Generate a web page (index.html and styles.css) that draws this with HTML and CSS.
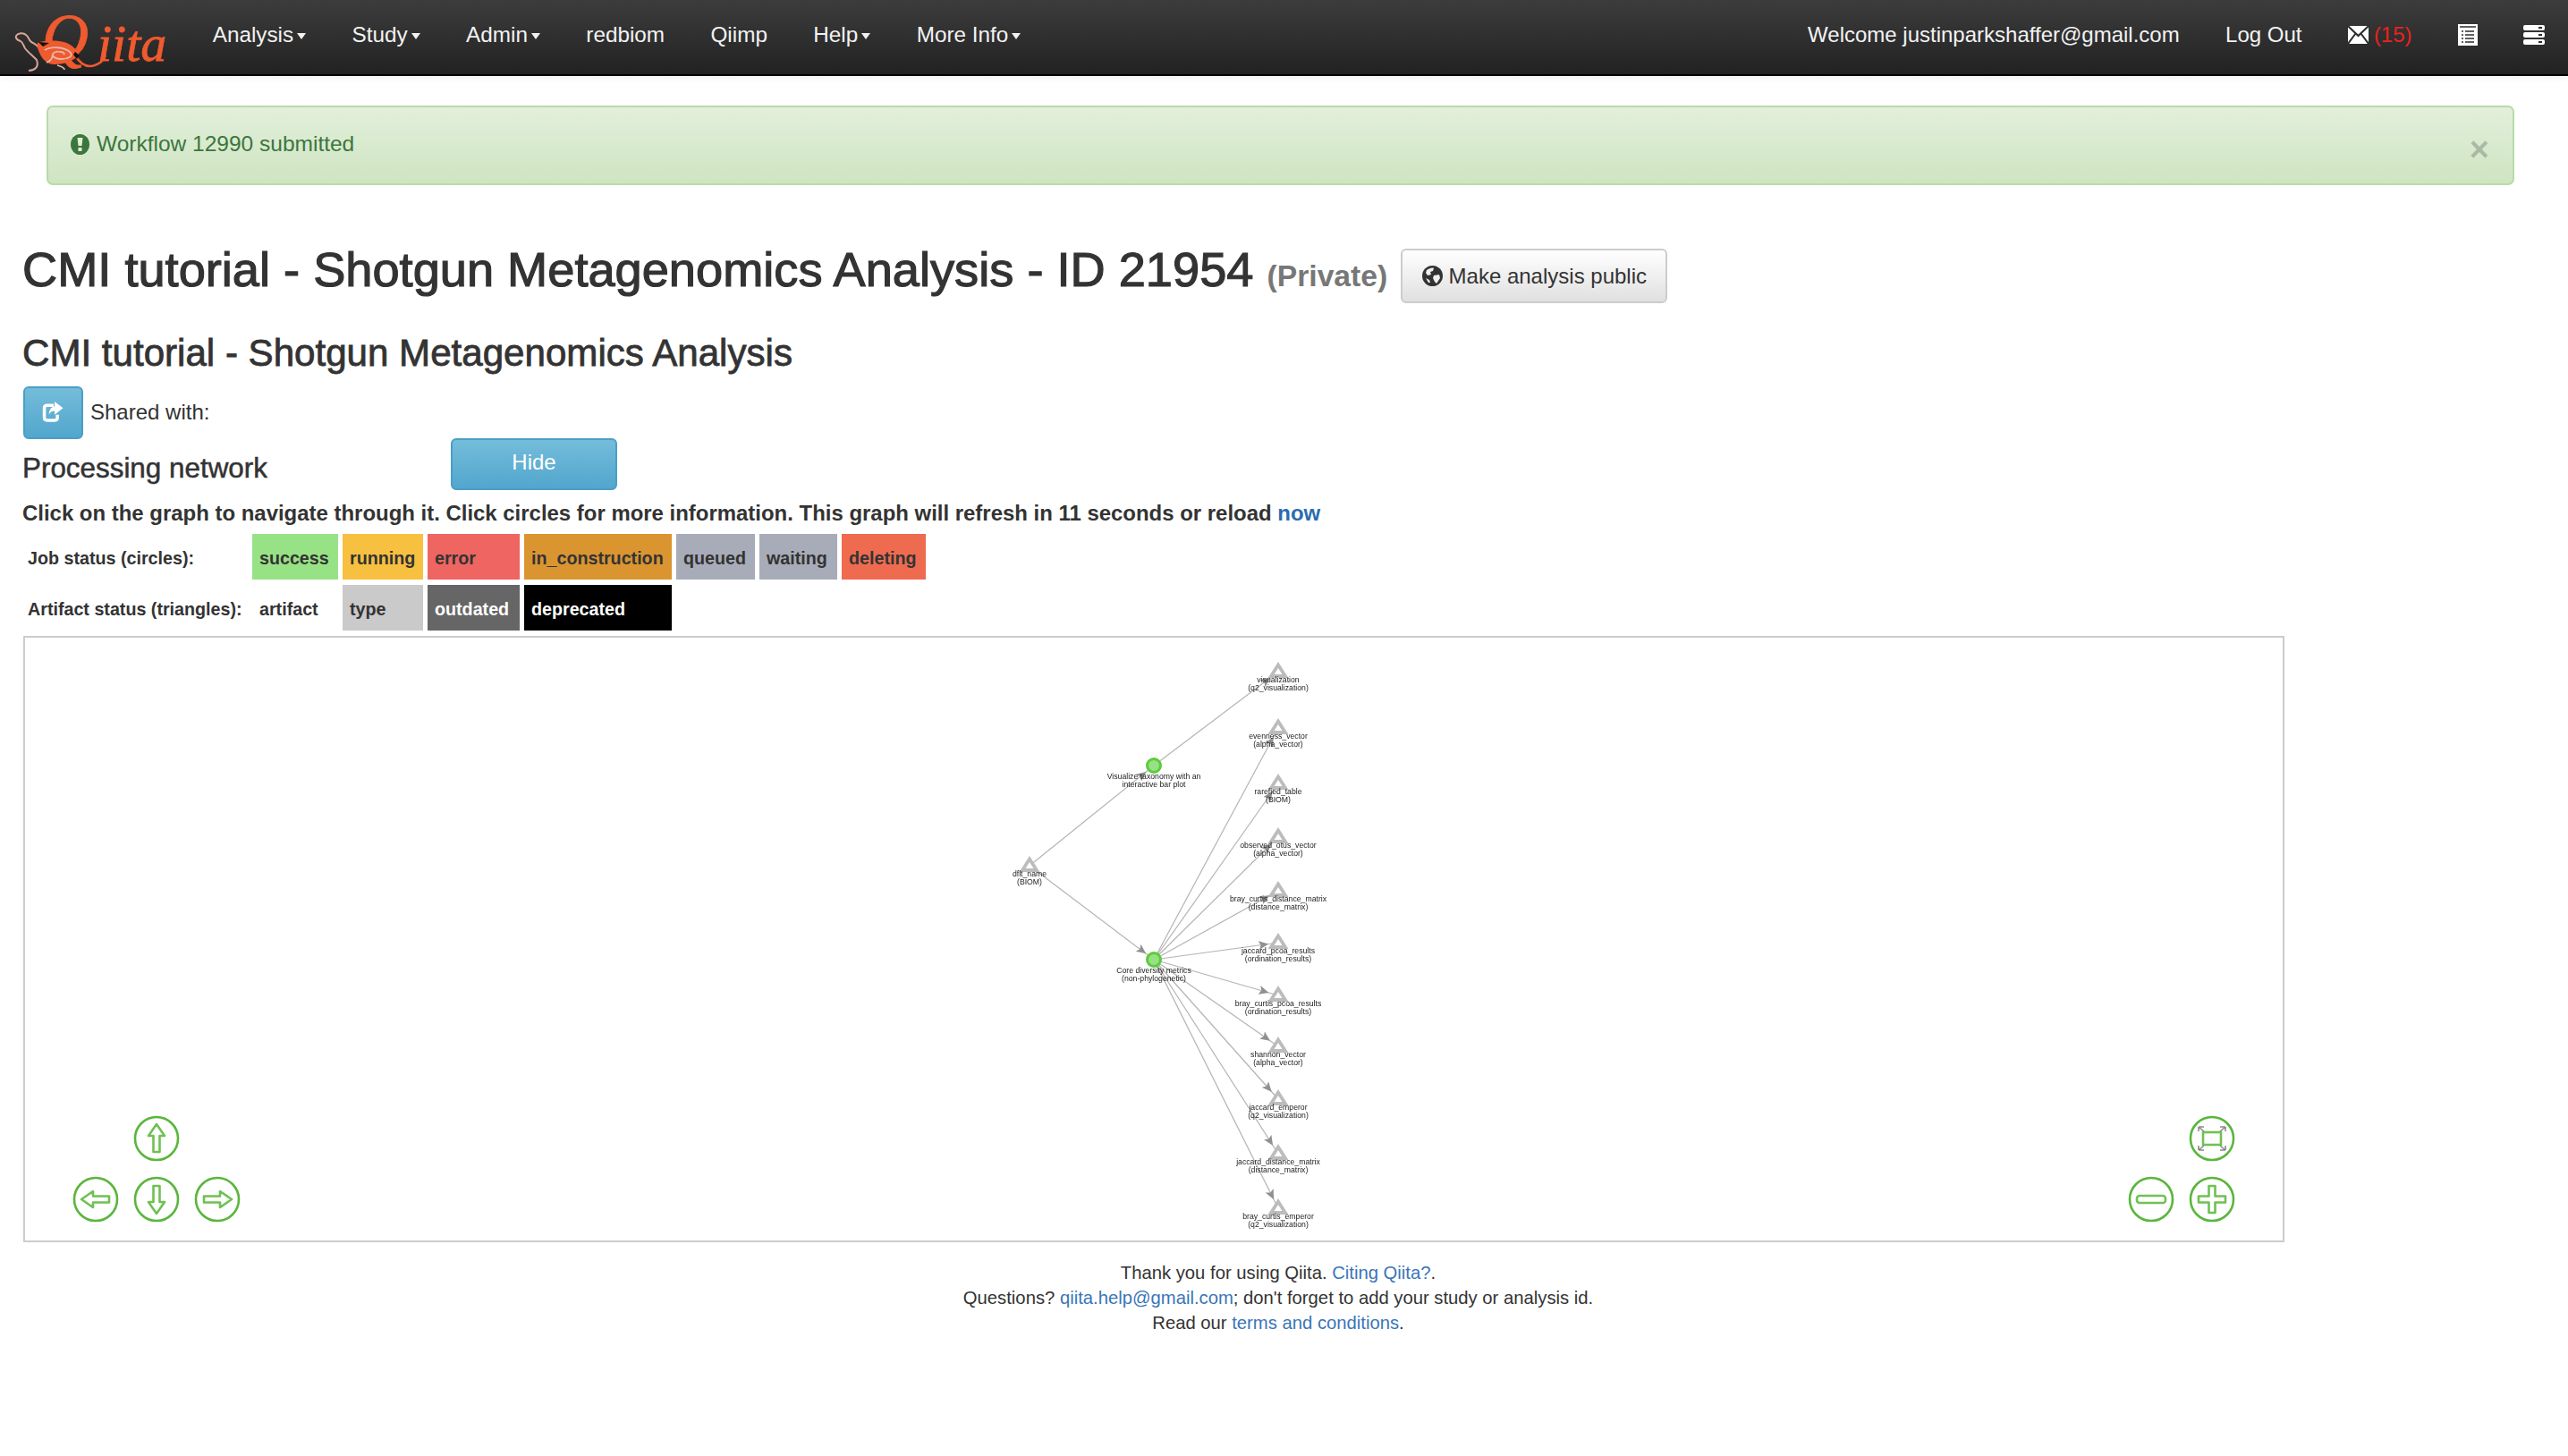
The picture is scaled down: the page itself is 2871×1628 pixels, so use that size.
FILE: index.html
```html
<!DOCTYPE html>
<html lang="en">
<head>
    <meta charset="UTF-8">
    <title>Qiita - Analysis</title>
    <link rel="stylesheet" href="styles.css">
</head>
<body>
    <nav class="navbar">
        <a class="logo" href="#">
            <svg width="212" height="83" viewBox="0 0 212 83">
                <text class="logo-q" x="47" y="65">Q</text>
                <text class="logo-iita" x="109" y="68">iita</text>
                <path class="logo-tail" d="M84 62c6 10 13 14 22 11 6-2 10-6 12-11" />
                <path class="turtle-line" d="M18 40c2-3 8-4 11-1 3 2 3 5 5 7 3 3 7 3 9 7M18 40c-1 3 2 5 5 6 3 2 3 5 5 8 3 4 8 8 13 13 1 3 1 7-1 9-2 2-5 3-8 3" />
                <path class="turtle-shell" d="M42 48c12-4 30-3 38 3 5 4 8 8 8 11-6 6-16 10-27 10-8 0-13-5-16-11-2-4-4-9-3-13z" />
                <path class="turtle-swirl" d="M50 56c8-5 22-3 28 2 3 3 2 6-3 7-6 2-14 1-16-3-1-3 4-5 8-4 4 0 6 2 4 3M52 70c5-2 7-6 7-10M64 73c4 1 8 3 8 5" />
                <path class="turtle-mark" d="M43 47l12 1-7 4zM84 58l5 4-3 4-4-5z" />
            </svg>
        </a>
        <ul class="nav-list">
            <li class="nav-item">Analysis<span class="caret"></span></li>
            <li class="nav-item">Study<span class="caret"></span></li>
            <li class="nav-item">Admin<span class="caret"></span></li>
            <li class="nav-item">redbiom</li>
            <li class="nav-item">Qiimp</li>
            <li class="nav-item">Help<span class="caret"></span></li>
            <li class="nav-item">More Info<span class="caret"></span></li>
        </ul>
        <ul class="nav-list nav-right">
            <li class="nav-item">Welcome justinparkshaffer@gmail.com</li>
            <li class="nav-item">Log Out</li>
            <li class="nav-item">
                <svg class="nav-icon" width="23" height="20" viewBox="0 0 23 20">
                    <path fill="#fff" d="M0 0h23v20H0z" />
                    <path fill="none" stroke="#2c2c2c" stroke-width="2" d="M0 0l11.5 11L23 0M0 20l8.5-11.5M23 20L14.5 8.5" />
                </svg>
                <span class="mail-count">(15)</span>
            </li>
            <li class="nav-item">
                <svg class="nav-icon" width="22" height="24" viewBox="0 0 22 24">
                    <path fill="#fff" d="M0 0h22v24H0z" />
                    <path fill="none" stroke="#2c2c2c" stroke-width="1.6" d="M2 3h18M4 8h2M8 8h10M4 12h2M8 12h10M4 16h2M8 16h10M4 20h2M8 20h10" />
                </svg>
            </li>
            <li class="nav-item">
                <svg class="nav-icon" width="24" height="22" viewBox="0 0 24 22">
                    <rect fill="#fff" width="24" height="6" rx="2" />
                    <rect fill="#fff" y="8" width="24" height="6" rx="2" />
                    <rect fill="#fff" y="16" width="24" height="6" rx="2" />
                    <path fill="#2c2c2c" d="M17 2h4v2h-4zM17 10h4v2h-4zM17 18h4v2h-4z" />
                </svg>
            </li>
        </ul>
    </nav>

    <div class="alert">
        <span class="alert-text">
            <svg class="alert-icon" width="21" height="23" viewBox="0 0 21 23">
                <ellipse cx="10.5" cy="11.5" rx="10.5" ry="11.5" fill="#3c763d" />
                <path fill="#dff0d8" d="M7.5 4h6l-1 9h-4zM8.5 15h4v4h-4z" />
            </svg>
            Workflow 12990 submitted
        </span>
        <span class="alert-close">×</span>
    </div>

    <div class="title-row">
        <h1>CMI tutorial - Shotgun Metagenomics Analysis - ID 21954 <small>(Private)</small></h1>
        <button class="btn btn-default">
            <svg width="23" height="23" viewBox="0 0 23 23">
                <circle cx="11.5" cy="11.5" r="11.5" fill="#333" />
                <path fill="#f0f0f0" d="M5 5c3-2 6-3 8-2l-1 3-3 1 1 3-4 1-2-3zM13 11l6-1 1 4-4 6-2-2-2-4zM4 14l4 2 1 3-2 0z" />
            </svg>
            Make analysis public
        </button>
    </div>

    <h2>CMI tutorial - Shotgun Metagenomics Analysis</h2>

    <div class="share-row">
        <button class="btn btn-info btn-share">
            <svg width="25" height="23" viewBox="0 0 23 22">
                <path fill="none" stroke="#fff" stroke-width="3.4" d="M12 4H5C3 4 2 5 2 7v10c0 2 1 3 3 3h8c2 0 3-1 3-3v-3" />
                <path fill="#fff" d="M13 0l9 7-9 7V10c-3 0-5 1-6 4 0-5 2-8 6-9z" />
            </svg>
        </button>
        <span class="share-text">Shared with:</span>
    </div>

    <div class="network-row">
        <h4>Processing network</h4>
        <button class="btn btn-info btn-hide">Hide</button>
    </div>

    <p class="hint">Click on the graph to navigate through it. Click circles for more information. This graph will refresh in 11 seconds or reload <a href="#">now</a></p>

    <table class="legend">
        <tr>
            <td class="col-label">Job status (circles):</td>
            <td class="col-a st-success">success</td>
            <td class="col-b st-running">running</td>
            <td class="col-c st-error">error</td>
            <td class="col-d st-construction">in_construction</td>
            <td class="col-e st-queued">queued</td>
            <td class="col-f st-queued">waiting</td>
            <td class="col-g st-deleting">deleting</td>
        </tr>
        <tr>
            <td>Artifact status (triangles):</td>
            <td>artifact</td>
            <td class="st-type">type</td>
            <td class="st-outdated">outdated</td>
            <td class="st-deprecated">deprecated</td>
        </tr>
    </table>

    <div class="graph">
        <svg class="graph-canvas" viewBox="28 713 2524 674">
            <defs>
                <marker id="arrow" markerUnits="userSpaceOnUse" markerWidth="32" markerHeight="10" refX="22" refY="5" orient="auto">
                    <path d="M0 0L11 5L0 10L2.5 5z" fill="#909090" />
                </marker>
                <polygon id="tri" points="0,-7.5 8,5 -8,5" fill="#fff" stroke="#bcbcbc" stroke-width="3.8" />
                <circle id="job" r="7.5" fill="#97e086" stroke="#5ccc3c" stroke-width="3" />
                <g id="nav-ring">
                    <circle r="24" fill="#fff" stroke="#5ab63c" stroke-width="2.6" />
                </g>
                <g id="nav-arrow">
                    <use href="#nav-ring" />
                    <path d="M0-16L9-3H3.5V15H-3.5V-3H-9z" fill="none" stroke="#6fc152" stroke-width="2.6" stroke-linejoin="round" />
                </g>
            </defs>

            <g class="edges">
                <line x1="1151" y1="968" x2="1290" y2="856" marker-end="url(#arrow)" />
                <line x1="1290" y1="856" x2="1429" y2="751" marker-end="url(#arrow)" />
                <line x1="1151" y1="968" x2="1290" y2="1073" marker-end="url(#arrow)" />
                <line x1="1290" y1="1073" x2="1429" y2="814" marker-end="url(#arrow)" />
                <line x1="1290" y1="1073" x2="1429" y2="876" marker-end="url(#arrow)" />
                <line x1="1290" y1="1073" x2="1429" y2="936" marker-end="url(#arrow)" />
                <line x1="1290" y1="1073" x2="1429" y2="996" marker-end="url(#arrow)" />
                <line x1="1290" y1="1073" x2="1429" y2="1054" marker-end="url(#arrow)" />
                <line x1="1290" y1="1073" x2="1429" y2="1113" marker-end="url(#arrow)" />
                <line x1="1290" y1="1073" x2="1429" y2="1170" marker-end="url(#arrow)" />
                <line x1="1290" y1="1073" x2="1429" y2="1229" marker-end="url(#arrow)" />
                <line x1="1290" y1="1073" x2="1429" y2="1290" marker-end="url(#arrow)" />
                <line x1="1290" y1="1073" x2="1429" y2="1351" marker-end="url(#arrow)" />
            </g>

            <g>
                <use href="#tri" x="1151" y="968" />
                <use href="#tri" x="1429" y="751" />
                <use href="#tri" x="1429" y="814" />
                <use href="#tri" x="1429" y="876" />
                <use href="#tri" x="1429" y="936" />
                <use href="#tri" x="1429" y="996" />
                <use href="#tri" x="1429" y="1054" />
                <use href="#tri" x="1429" y="1113" />
                <use href="#tri" x="1429" y="1170" />
                <use href="#tri" x="1429" y="1229" />
                <use href="#tri" x="1429" y="1290" />
                <use href="#tri" x="1429" y="1351" />
                <use href="#job" x="1290" y="856" />
                <use href="#job" x="1290" y="1073" />
            </g>

            <g class="labels">
                <text y="980"><tspan x="1151">dflt_name</tspan><tspan x="1151" dy="8.7">(BIOM)</tspan></text>
                <text y="871"><tspan x="1290">Visualize taxonomy with an</tspan><tspan x="1290" dy="8.7">interactive bar plot</tspan></text>
                <text y="1088"><tspan x="1290">Core diversity metrics</tspan><tspan x="1290" dy="8.7">(non-phylogenetic)</tspan></text>
                <text y="763"><tspan x="1429">visualization</tspan><tspan x="1429" dy="8.7">(q2_visualization)</tspan></text>
                <text y="826"><tspan x="1429">evenness_vector</tspan><tspan x="1429" dy="8.7">(alpha_vector)</tspan></text>
                <text y="888"><tspan x="1429">rarefied_table</tspan><tspan x="1429" dy="8.7">(BIOM)</tspan></text>
                <text y="948"><tspan x="1429">observed_otus_vector</tspan><tspan x="1429" dy="8.7">(alpha_vector)</tspan></text>
                <text y="1008"><tspan x="1429">bray_curtis_distance_matrix</tspan><tspan x="1429" dy="8.7">(distance_matrix)</tspan></text>
                <text y="1066"><tspan x="1429">jaccard_pcoa_results</tspan><tspan x="1429" dy="8.7">(ordination_results)</tspan></text>
                <text y="1125"><tspan x="1429">bray_curtis_pcoa_results</tspan><tspan x="1429" dy="8.7">(ordination_results)</tspan></text>
                <text y="1182"><tspan x="1429">shannon_vector</tspan><tspan x="1429" dy="8.7">(alpha_vector)</tspan></text>
                <text y="1241"><tspan x="1429">jaccard_emperor</tspan><tspan x="1429" dy="8.7">(q2_visualization)</tspan></text>
                <text y="1302"><tspan x="1429">jaccard_distance_matrix</tspan><tspan x="1429" dy="8.7">(distance_matrix)</tspan></text>
                <text y="1363"><tspan x="1429">bray_curtis_emperor</tspan><tspan x="1429" dy="8.7">(q2_visualization)</tspan></text>
            </g>

            <use href="#nav-arrow" transform="translate(175 1273)" />
            <use href="#nav-arrow" transform="translate(107 1341) rotate(-90)" />
            <use href="#nav-arrow" transform="translate(175 1341) rotate(180)" />
            <use href="#nav-arrow" transform="translate(243 1341) rotate(90)" />

            <g transform="translate(2473 1273)">
                <use href="#nav-ring" />
                <rect x="-10" y="-7" width="20" height="14" fill="none" stroke="#6fc152" stroke-width="2.6" />
                <path d="M-15-13l6 5M15-13l-6 5M-15 13l6-5M15 13l-6-5M-15-13h6M-15-13v5M15-13h-6M15-13v5M-15 13h6M-15 13v-5M15 13h-6M15 13v-5" fill="none" stroke="#8a8a8a" stroke-width="1.6" />
            </g>
            <g transform="translate(2405 1341)">
                <use href="#nav-ring" />
                <rect x="-16" y="-4" width="32" height="8" rx="3" fill="none" stroke="#6fc152" stroke-width="2.6" />
            </g>
            <g transform="translate(2473 1341)">
                <use href="#nav-ring" />
                <path d="M-3.5-15h7v11.5H15v7H3.5V15h-7V3.5H-15v-7H-3.5z" fill="none" stroke="#6fc152" stroke-width="2.6" stroke-linejoin="round" />
            </g>
        </svg>
    </div>

    <footer class="footer">
        <div>Thank you for using Qiita. <a href="#">Citing Qiita?</a>.</div>
        <div>Questions? <a href="#">qiita.help@gmail.com</a>; don't forget to add your study or analysis id.</div>
        <div>Read our <a href="#">terms and conditions</a>.</div>
    </footer>
</body>
</html>
```

FILE: styles.css
```css
* { box-sizing: border-box; }
body { margin: 0; font-family: "Liberation Sans", Arial, sans-serif; font-size: 24px; color: #333; background: #fff; }
a { color: #2a6cb0; text-decoration: none; }

.navbar {
    display: flex;
    align-items: center;
    height: 85px;
    border-bottom: 2px solid #000;
    background: linear-gradient(to bottom, #3c3c3c, #222);
    box-shadow: 0 2px 8px rgba(0, 0, 0, .06);
    color: #f2f2f2;
}
.logo { display: block; width: 212px; height: 83px; }
.logo svg { display: block; overflow: visible; }
.logo-q { font: italic 72px "Liberation Serif", serif; fill: #ef5a2f; stroke: #ef5a2f; stroke-width: .8; }
.logo-iita { font: italic 58px "Liberation Serif", serif; fill: #ef5a2f; stroke: #ef5a2f; stroke-width: .8; }
.logo-tail { fill: none; stroke: #ef5a2f; stroke-width: 2.5; }
.turtle-line { fill: none; stroke: #d9a595; stroke-width: 2; }
.turtle-shell { fill: #ef5a2f; }
.turtle-swirl { fill: none; stroke: #e6b7a6; stroke-width: 1.8; }
.turtle-mark { fill: #111; }

.nav-list { display: flex; align-items: center; list-style: none; margin: 0; padding: 0; }
.nav-list:not(.nav-right) .nav-item { font-size: 24.3px; }
.nav-right { margin-left: auto; }
.nav-item { display: flex; align-items: center; padding: 0 25.7px 6px; white-space: nowrap; }
.caret {
    margin-left: 4px;
    margin-top: 3px;
    border-top: 7px solid #f2f2f2;
    border-left: 5.5px solid transparent;
    border-right: 5.5px solid transparent;
}
.nav-icon { display: block; }
.mail-count { margin-left: 6px; color: #e8231c; }

.alert {
    display: flex;
    justify-content: space-between;
    height: 89px;
    margin: 33px 60px 0 52px;
    padding: 27px 26px 0 25px;
    border: 2px solid #b8dba8;
    border-radius: 7px;
    background: linear-gradient(to bottom, #e2efdc, #cfe5c1);
    color: #3c763d;
    font-size: 24.5px;
}
.alert-text { display: flex; align-items: center; height: 28px; }
.alert-icon { margin-right: 8px; }
.alert-close { margin-top: 3px; font-size: 38px; font-weight: bold; line-height: 34px; color: #000; opacity: .2; }

.title-row { display: flex; align-items: center; height: 61px; margin: 71px 0 0 25px; }
h1 { margin: 0 15px 8px 0; font-size: 54.2px; line-height: 60px; font-weight: normal; -webkit-text-stroke: 1.2px #333; white-space: nowrap; }
h1 small { font-size: 33.7px; font-weight: bold; color: #777; -webkit-text-stroke: 0; }
h2 { margin: 36px 0 0 25px; font-size: 42.1px; line-height: 40px; font-weight: normal; -webkit-text-stroke: .8px #333; }
h4 { width: 479px; margin: 19px 0 0; font-size: 31.4px; line-height: 30px; font-weight: normal; -webkit-text-stroke: .5px #333; }

.btn {
    display: flex;
    align-items: center;
    justify-content: center;
    border-radius: 6px;
    font: inherit;
    padding: 0;
}
.btn-default {
    width: 298px;
    height: 61px;
    gap: 7px;
    border: 2px solid #ccc;
    background: linear-gradient(to bottom, #fff, #e0e0e0);
    color: #333;
}
.btn-info {
    border: 2px solid #4a9fc5;
    background: linear-gradient(to bottom, #74bcdb, #52a6cd);
    color: #fff;
}
.btn-share { width: 67px; height: 59px; margin-right: 8px; padding-bottom: 2px; }
.btn-hide { width: 186px; height: 58px; padding-bottom: 4px; }

.share-row { display: flex; align-items: center; margin: 17px 0 0 26px; }
.share-text { margin-bottom: 2px; }
.network-row { display: flex; align-items: flex-start; margin: -1px 0 0 25px; }

.hint { margin: 12px 0 0 25px; font-size: 23.95px; line-height: 28px; font-weight: bold; }

.legend { margin: 3px 0 0 22px; border-collapse: separate; border-spacing: 5px 6px; table-layout: fixed; font-size: 19.7px; font-weight: bold; }
.legend td { height: 51px; padding: 3px 0 0 8px; white-space: nowrap; }
.legend td:first-child { padding-left: 4px; }
.col-label { width: 250px; }
.col-a { width: 96px; }
.col-b { width: 90px; }
.col-c { width: 103px; }
.col-d { width: 165px; }
.col-e { width: 88px; }
.col-f { width: 87px; }
.col-g { width: 94px; }
.st-success { background: #98e286; }
.st-running { background: #f7c040; }
.st-error { background: #ef6561; }
.st-construction { background: #da9531; }
.st-queued { background: #a8acb8; }
.st-deleting { background: #ef6b50; }
.st-type { background: #cacaca; }
.st-outdated { background: #666; color: #fff; }
.st-deprecated { background: #000; color: #fff; }

.graph { width: 2528px; height: 678px; margin-left: 26px; border: 2px solid #ccc; }
.graph-canvas { display: block; width: 100%; height: 100%; }
.edges line { stroke: #b4b4b4; stroke-width: 1.2; }
.labels text { font-size: 8.7px; fill: #222; text-anchor: middle; filter: blur(.3px); }

.footer { width: 2858px; margin-top: 20px; font-size: 20.25px; line-height: 28px; text-align: center; }
.footer a { color: #3a75b8; }
```
